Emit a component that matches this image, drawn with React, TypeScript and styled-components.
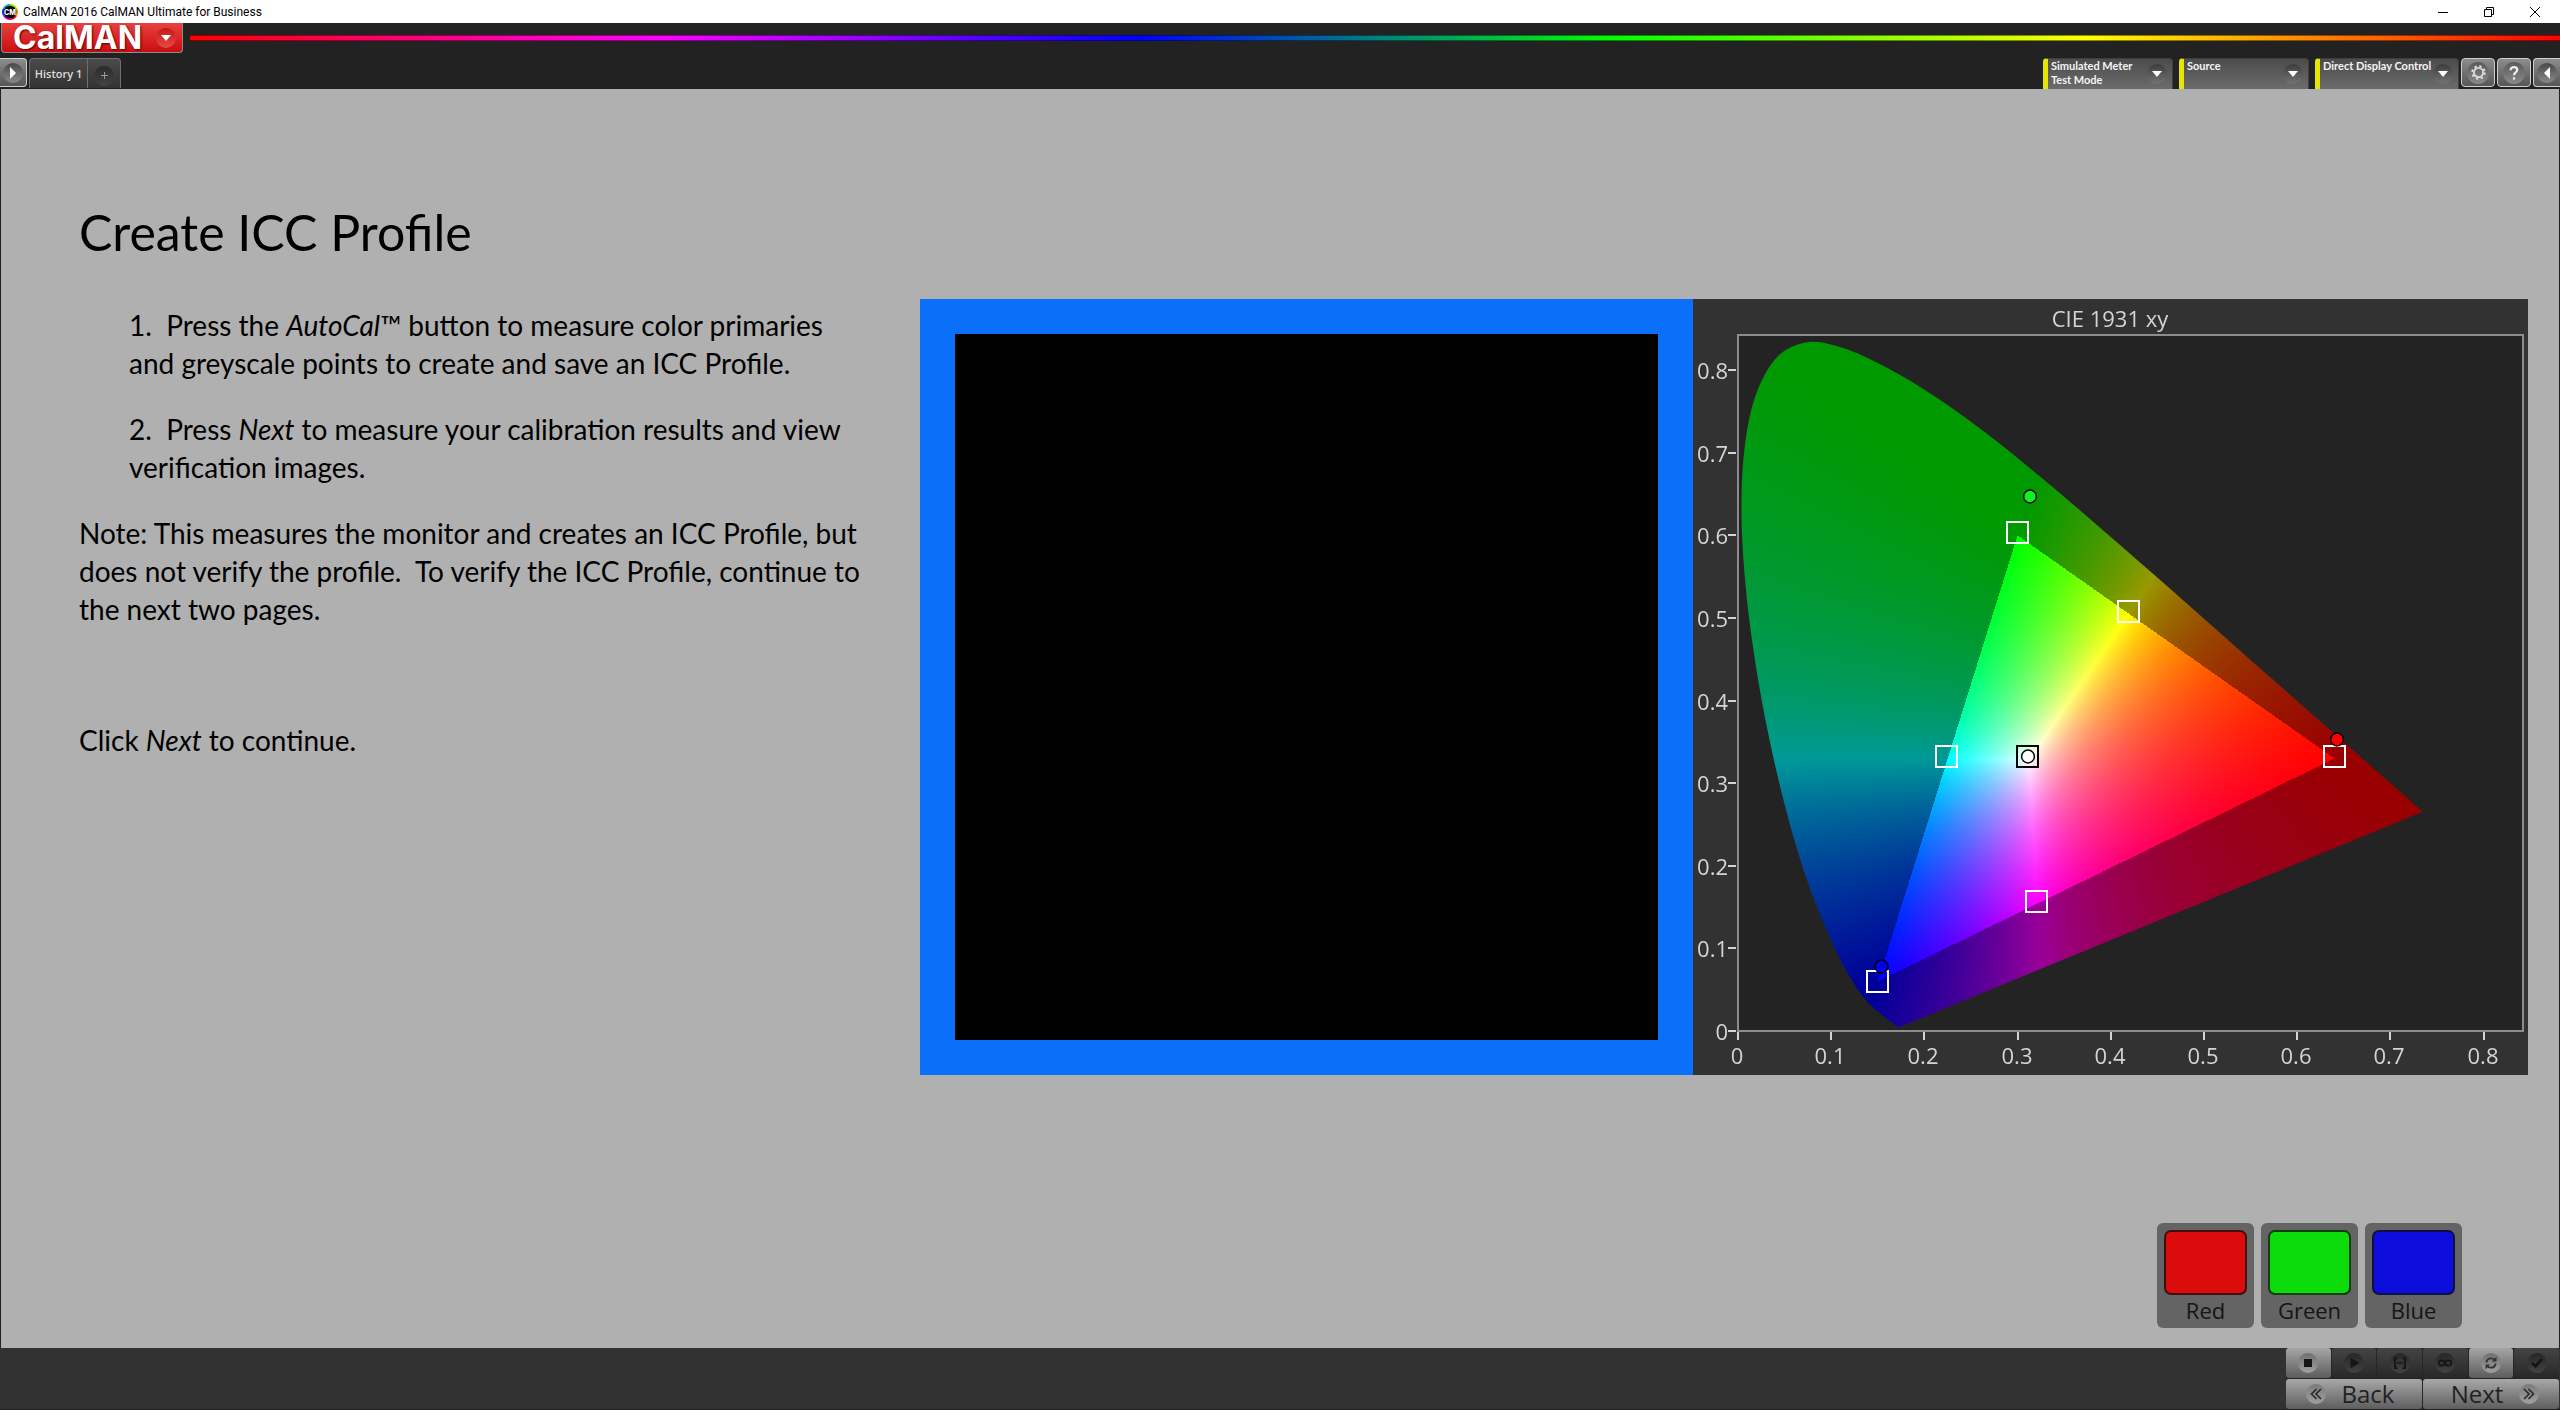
import React, { useEffect, useRef } from "react";
import styled, { createGlobalStyle } from "styled-components";

const UI = `"Open Sans", "Noto Sans", sans-serif`;
const BODY = `Lato, "Open Sans", sans-serif`;

const GlobalStyle = createGlobalStyle`
  * { box-sizing: border-box; }
  body { margin: 0; background: #222; font-family: ${UI}; }
  button { font: inherit; color: inherit; margin: 0; padding: 0; border: 0; background: none; cursor: pointer; }
  h1, h2, p { margin: 0; font-weight: 400; }
`;

const Shell = styled.div`
  min-height: 100vh;
  display: flex;
  flex-direction: column;
  background: #222;
`;

/* ---------- window title bar ---------- */
const TitleBar = styled.header`
  height: 23px;
  display: flex;
  align-items: center;
  gap: 5px;
  padding-left: 2px;
  background: #fff;
  color: #000;
  font: 400 12px/16px Roboto, ${UI};
`;
const TitleText = styled.span`
  flex: 1;
`;
const WindowButtons = styled.div`
  display: flex;
  padding-right: 2px;
`;
const WindowButton = styled.button`
  width: 46px;
  height: 21px;
  display: grid;
  place-items: center;
`;

/* ---------- header ---------- */
const Header = styled.div`
  display: flex;
  flex-direction: column;
  gap: 5px;
  background: #222;
`;
const BrandRow = styled.div`
  display: flex;
  align-items: flex-start;
  gap: 7px;
  padding-left: 1px;
`;
const BrandButton = styled.button`
  width: 182px;
  height: 30px;
  display: flex;
  align-items: center;
  justify-content: space-between;
  padding: 0 6px 0 11px;
  border: 1px solid #8d8d8d;
  border-top: 0;
  border-radius: 0 0 4px 4px;
  background: linear-gradient(#e8423e, #c90d10);
  color: #fff;
  font: 700 32px/28px Inter, sans-serif;
  text-shadow: 1px 1px 2px #5a0000;
`;
const Knob = styled.span<{ $size: number; $from: string; $to: string; $ink?: string }>`
  flex: none;
  width: ${(p) => p.$size}px;
  height: ${(p) => p.$size}px;
  display: grid;
  place-items: center;
  border-radius: 50%;
  background: linear-gradient(${(p) => p.$from}, ${(p) => p.$to});
  color: ${(p) => p.$ink ?? "#fff"};
`;
const Spectrum = styled.div`
  flex: 1;
  height: 6px;
  margin-top: 12px;
  border: solid rgba(0, 0, 0, 0.45);
  border-width: 1px 0;
  background: linear-gradient(90deg, #f00, #f0f 20%, #00f 40%, #0f0 60%, #ff0 80%, #f00);
`;
const TabRow = styled.div`
  height: 31px;
  display: flex;
  justify-content: space-between;
  align-items: flex-start;
`;
const TabGroup = styled.div<{ $gap: number }>`
  display: flex;
  gap: ${(p) => p.$gap}px;
`;
const SquareButton = styled.button<{ $open?: "left" | "right" }>`
  width: ${(p) => (p.$open ? 27 : 34)}px;
  height: 29px;
  display: grid;
  place-items: center;
  border: 1px solid #cfcfcf;
  border-radius: 4px;
  background: linear-gradient(#8c8c8c, #565656);
  ${(p) => p.$open === "left" && "border-left: 0; border-radius: 0 4px 4px 0;"}
  ${(p) => p.$open === "right" && "border-right: 0; border-radius: 4px 0 0 4px;"}
`;
const HistoryTabs = styled.div`
  height: 30px;
  display: flex;
  border: 1px solid #6f6f6f;
  border-bottom: 0;
  border-radius: 4px 4px 0 0;
  background: linear-gradient(#4a4a4a, #333);
  color: #ddd;
`;
const HistoryTab = styled.button`
  width: 58px;
  border-right: 1px solid #6f6f6f;
  font-size: 11px;
  font-weight: 600;
  line-height: 16px;
`;
const AddTab = styled.button`
  width: 32px;
  display: grid;
  place-items: center;
  padding-top: 4px;
`;
const DeviceButton = styled.button<{ $width: number }>`
  width: ${(p) => p.$width}px;
  height: 31px;
  display: flex;
  justify-content: space-between;
  padding: 0 5px 0 3px;
  border: 1px solid #3f3f3f;
  border-left: 5px solid #e6e600;
  border-bottom: 0;
  border-radius: 4px 4px 0 0;
  background: linear-gradient(#4c4c4c, #6c6c6c);
  color: #f4f4f4;
  font: 700 11px/14px ${BODY};
  text-align: left;
  white-space: nowrap;
`;
const DeviceKnob = styled.span`
  display: flex;
  align-items: center;
`;

/* ---------- workspace ---------- */
const Workspace = styled.main`
  flex: 1;
  display: flex;
  flex-direction: column;
  justify-content: space-between;
  margin: 0 1px;
  padding: 113px 31px 20px 78px;
  background: #b0b0b0;
  color: #000;
`;
const Content = styled.div`
  display: grid;
  grid-template-columns: minmax(0, 841fr) minmax(0, 773fr) minmax(0, 835fr);
  align-items: start;
`;
const Article = styled.article`
  font: 400 28px/38px ${BODY};
  padding-right: 50px;
`;
const Heading = styled.h1`
  font-size: 50px;
  line-height: 60px;
  margin-bottom: 44px;
`;
const Step = styled.p`
  padding-left: 50px;
  margin-bottom: 28px;
`;
const Note = styled.p`
  margin-bottom: 93px;
`;
const PatchFrame = styled.section`
  margin-top: 97px;
  aspect-ratio: 773 / 776;
  display: flex;
  padding: 35px;
  background: #0a70fa;
`;
const Patch = styled.div`
  flex: 1;
  background: #000;
`;
const ChartPanel = styled.section`
  margin-top: 97px;
  display: grid;
  aspect-ratio: 835 / 776;
  background: #323232;
`;
const ChartRaster = styled.canvas`
  grid-area: 1 / 1;
  width: 100%;
  height: 100%;
`;
const ChartOverlay = styled.svg`
  grid-area: 1 / 1;
  width: 100%;
  height: 100%;
  font: 400 22px ${UI};
`;
const Swatches = styled.div`
  display: flex;
  justify-content: flex-end;
  gap: 7px;
  padding-right: 66px;
`;
const SwatchButton = styled.button`
  width: 97px;
  height: 105px;
  display: flex;
  flex-direction: column;
  align-items: center;
  padding-top: 7px;
  border-radius: 6px;
  background: #646464;
  color: #151515;
  font-size: 22px;
  line-height: 31px;
`;
const SwatchColour = styled.span<{ $fill: string; $edge: string }>`
  width: 83px;
  height: 65px;
  border: 2px solid ${(p) => p.$edge};
  border-radius: 7px;
  background: ${(p) => p.$fill};
`;

/* ---------- footer ---------- */
const Footer = styled.footer`
  height: 62px;
  display: flex;
  justify-content: flex-end;
  padding-right: 1px;
  border-bottom: 1px solid #222;
  background: #323232;
`;
const Transport = styled.div`
  width: 273px;
  display: grid;
  grid-template-columns: repeat(6, 1fr);
  grid-template-rows: 30px 30px;
  gap: 1px;
  background: #262626;
`;
const TransportButton = styled.button<{ $lit?: boolean }>`
  display: grid;
  place-items: center;
  border-radius: 3px;
  background: ${(p) => (p.$lit ? "linear-gradient(#a6a6a6, #5c5c5c)" : "linear-gradient(#444, #282828)")};
`;
const PageButton = styled.button<{ $side: "left" | "right" }>`
  grid-column: span 3;
  display: flex;
  align-items: center;
  justify-content: center;
  gap: 16px;
  padding-${(p) => (p.$side === "left" ? "right" : "left")}: 8px;
  border-radius: 3px;
  background: linear-gradient(#a8a8a8, #5e5e5e);
  color: #222;
  font-size: 24px;
  line-height: 28px;
`;

/* ---------- CIE chart ---------- */
const CHART_W = 835;
const CHART_H = 776;
const px = (x: number) => 45 + x * 932;
const py = (y: number) => 732 - y * 826;

const LOCUS: [number, number][] = [
  [0.1741, 0.005], [0.1733, 0.0048], [0.1714, 0.0051], [0.1689, 0.0069], [0.1644, 0.0109],
  [0.1566, 0.0177], [0.144, 0.0297], [0.1355, 0.0399], [0.1241, 0.0578], [0.1096, 0.0868],
  [0.0913, 0.1327], [0.0687, 0.2007], [0.0454, 0.295], [0.0235, 0.4127], [0.0082, 0.5384],
  [0.0039, 0.6548], [0.0139, 0.7502], [0.0389, 0.812], [0.0743, 0.8338], [0.1142, 0.8262],
  [0.1547, 0.8059], [0.1929, 0.7816], [0.2296, 0.7543], [0.2658, 0.7243], [0.3016, 0.6923],
  [0.3373, 0.6589], [0.3731, 0.6245], [0.4087, 0.5896], [0.4441, 0.5547], [0.4788, 0.5202],
  [0.5125, 0.4866], [0.5448, 0.4544], [0.5752, 0.4242], [0.6029, 0.3965], [0.627, 0.3725],
  [0.6482, 0.3514], [0.6658, 0.334], [0.6915, 0.3083], [0.7347, 0.2653],
];

function traceLocus(ctx: CanvasRenderingContext2D) {
  const pts = LOCUS.map(([x, y]) => [px(x), py(y)]);
  ctx.beginPath();
  ctx.moveTo(pts[0][0], pts[0][1]);
  for (let i = 0; i < pts.length - 1; i++) {
    const a = pts[Math.max(0, i - 1)];
    const b = pts[i];
    const c = pts[i + 1];
    const d = pts[Math.min(pts.length - 1, i + 2)];
    ctx.bezierCurveTo(
      b[0] + (c[0] - a[0]) / 6, b[1] + (c[1] - a[1]) / 6,
      c[0] - (d[0] - b[0]) / 6, c[1] - (d[1] - b[1]) / 6,
      c[0], c[1],
    );
  }
  ctx.closePath();
}

/* Chromaticity to display colour: brightest channel at full scale, dimmed outside the Rec.709 gamut. */
function chromaticityColour(x: number, y: number): [number, number, number] {
  const X = x / y;
  const Z = (1 - x - y) / y;
  const rgb = [
    3.2406 * X - 1.5372 - 0.4986 * Z,
    -0.9689 * X + 1.8758 + 0.0415 * Z,
    0.0557 * X - 0.204 + 1.057 * Z,
  ];
  const peak = Math.max(...rgb);
  const level = Math.min(...rgb) < 0 ? 153 : 255;
  return rgb.map((c) => level * (Math.max(0, c) / peak)) as [number, number, number];
}

function drawGamut(canvas: HTMLCanvasElement) {
  const ctx = canvas.getContext("2d");
  if (!ctx) return;
  ctx.clearRect(0, 0, CHART_W, CHART_H);
  const image = ctx.createImageData(CHART_W, CHART_H);
  for (let j = 0; j < CHART_H; j++) {
    for (let i = 0; i < CHART_W; i++) {
      const x = (i + 0.5 - 45) / 932;
      const y = Math.max(0.001, (732 - j - 0.5) / 826);
      const [r, g, b] = chromaticityColour(x, y);
      image.data.set([r, g, b, 255], (j * CHART_W + i) * 4);
    }
  }
  ctx.putImageData(image, 0, 0);
  ctx.globalCompositeOperation = "destination-in";
  traceLocus(ctx);
  ctx.fill();
  ctx.globalCompositeOperation = "destination-over";
  ctx.fillStyle = "#232323";
  ctx.fillRect(44, 35, 787, 698);
  ctx.globalCompositeOperation = "source-over";
}

const TARGETS: { x: number; y: number; stroke: string }[] = [
  { x: 324.5, y: 233.5, stroke: "#fff" },
  { x: 435.5, y: 312.5, stroke: "#fff" },
  { x: 253.5, y: 457.5, stroke: "#fff" },
  { x: 343.5, y: 602.5, stroke: "#fff" },
  { x: 184.5, y: 682.5, stroke: "#fff" },
  { x: 641.5, y: 457.5, stroke: "#fff" },
  { x: 334.5, y: 457.5, stroke: "#000" },
];
const READINGS = [
  { x: 337, y: 197.5, fill: "#0cf520" },
  { x: 188.5, y: 667.5, fill: "#0000f5" },
  { x: 644, y: 440.5, fill: "#f00" },
  { x: 335, y: 457.5, fill: "#fff" },
];
const TICKS = [0, 1, 2, 3, 4, 5, 6, 7, 8];
const tickLabel = (n: number) => (n === 0 ? "0" : `0.${n}`);

function CieChart() {
  const ref = useRef<HTMLCanvasElement>(null);
  useEffect(() => {
    if (ref.current) drawGamut(ref.current);
  }, []);
  return (
    <ChartPanel aria-label="CIE 1931 xy">
      <ChartRaster ref={ref} width={CHART_W} height={CHART_H} />
      <ChartOverlay viewBox={`0 0 ${CHART_W} ${CHART_H}`}>
        <rect x="45" y="36" width="785" height="696" fill="none" stroke="#8c8c8c" strokeWidth="2" />
        <text x="417" y="28" textAnchor="middle" fill="#d4d4d4">CIE 1931 xy</text>
        {TICKS.map((n) => (
          <g key={n} fill="#d4d4d4">
            <rect x={Math.round(px(n / 10)) - 1} y="733" width="2" height="8" />
            <rect x="35" y={Math.round(py(n / 10)) - 1} width="8" height="2" />
            <text x={Math.round(px(n / 10)) - 1} y="765" textAnchor="middle">{tickLabel(n)}</text>
            <text x="35" y={Math.round(py(n / 10)) + 9} textAnchor="end">{tickLabel(n)}</text>
          </g>
        ))}
        {TARGETS.map((t) => (
          <rect key={`${t.x}-${t.y}`} x={t.x - 10.5} y={t.y - 10.5} width="21" height="21" fill="none" stroke={t.stroke} strokeWidth="2" />
        ))}
        {READINGS.map((r) => (
          <circle key={r.fill} cx={r.x} cy={r.y} r="6.4" fill={r.fill} stroke="#000" strokeWidth="1.5" />
        ))}
      </ChartOverlay>
    </ChartPanel>
  );
}

/* ---------- glyphs ---------- */
const DownArrow = () => (
  <svg width="10" height="6" viewBox="0 0 10 6"><path d="M0 0h10L5 6z" fill="#fff" /></svg>
);
const SideArrow = ({ flip }: { flip?: boolean }) => (
  <svg width="6" height="12" viewBox="0 0 6 12"><path d={flip ? "M6 0v12L0 6z" : "M0 0v12l6-6z"} fill="#fff" /></svg>
);
const Gear = () => (
  <svg width="15" height="15" viewBox="0 0 15 15" fill="none" stroke="#ddd">
    <circle cx="7.5" cy="7.5" r="4.6" strokeWidth="1.8" />
    <circle cx="7.5" cy="7.5" r="6.3" strokeWidth="1.8" strokeDasharray="2.4 2.55" />
  </svg>
);
const Question = () => (
  <svg width="10" height="14" viewBox="0 0 10 14" fill="none" stroke="#eee" strokeWidth="2.2">
    <path d="M1.6 4.2C1.6 2.2 3 1.2 5 1.2s3.3 1 3.3 2.8C8.3 6.2 5 6.2 5 9.3" />
    <path d="M5 11.300v2.300" />
  </svg>
);
const AppLogo = () => (
  <svg width="16" height="16" viewBox="0 0 16 16">
    <path d="M8 8V0a8 8 0 0 1 6.900 4z" fill="#9be000" />
    <path d="M8 8l6.900-4a8 8 0 0 1 0 8z" fill="#f09000" />
    <path d="M8 8l6.900 4A8 8 0 0 1 8 16z" fill="#e8102a" />
    <path d="M8 8v8a8 8 0 0 1-6.900-4z" fill="#c000e0" />
    <path d="M8 8l-6.900 4a8 8 0 0 1 0-8z" fill="#2030f0" />
    <path d="M8 8L1.100 4A8 8 0 0 1 8 0z" fill="#00b0c0" />
    <circle cx="8" cy="8" r="6.300" fill="#000" />
    <text x="8" y="10.500" textAnchor="middle" fill="#fff" fontFamily="Inter, sans-serif" fontWeight="800" fontSize="7">CM</text>
  </svg>
);

const INK = "#151515";
const Icon = ({ name }: { name: string }) => (
  <svg width="16" height="14" viewBox="0 0 16 14" fill="none" stroke={INK} strokeWidth="1.8">
    {name === "Stop" && <rect x="4" y="3" width="8" height="8" fill={INK} stroke="none" />}
    {name === "Play" && <path d="M4.500 2v10l9-5z" fill={INK} stroke="none" />}
    {name === "Range" && <><path d="M5 2H3v10h2M11 2h2v10h-2" /><path d="M5 7h6" strokeDasharray="1.5 1" /></>}
    {name === "Loop" && (
      <g strokeWidth="1.6">
        <ellipse cx="4.700" cy="7" rx="3" ry="2.600" />
        <ellipse cx="11.300" cy="7" rx="3" ry="2.600" />
      </g>
    )}
    {name === "Refresh" && <g stroke="#333"><path d="M3.300 6.500C3.800 3.700 6 2.300 8.200 2.300c1.600 0 2.800.6 3.700 1.700M12.700 7.500c-.5 2.800-2.700 4.200-4.900 4.200-1.600 0-2.800-.6-3.700-1.700" /><path d="M13.500.8v4.700H8.800zM2.500 13.200V8.500h4.700z" fill="#333" stroke="none" /></g>}
    {name === "Accept" && <path d="M3 7l3.500 3.300L13 3" strokeWidth="2.8" />}
  </svg>
);
const Chevrons = ({ flip }: { flip?: boolean }) => (
  <svg width="12" height="12" viewBox="0 0 12 12" fill="none" stroke="#2b2b2b" strokeWidth="1.7">
    <path d={flip ? "M1 1l5 5-5 5M5.500 1l5 5-5 5" : "M6.500 1l-5 5 5 5M11 1L6 6l5 5"} />
  </svg>
);

const DEVICES = [
  { label: ["Simulated Meter", "Test Mode"], width: 130 },
  { label: ["Source"], width: 130 },
  { label: ["Direct Display Control"], width: 144 },
];
const SWATCHES = [
  { name: "Red", fill: "#dc0c0c", edge: "#401010" },
  { name: "Green", fill: "#0cdc0c", edge: "#103c10" },
  { name: "Blue", fill: "#0c0cdc", edge: "#101040" },
];
const TRANSPORT = [
  { name: "Stop", lit: true },
  { name: "Play" },
  { name: "Range" },
  { name: "Loop" },
  { name: "Refresh", lit: true },
  { name: "Accept" },
];

export default function App() {
  return (
    <Shell>
      <GlobalStyle />
      <TitleBar>
        <AppLogo />
        <TitleText>CalMAN 2016 CalMAN Ultimate for Business</TitleText>
        <WindowButtons>
          <WindowButton aria-label="Minimize">
            <svg width="10" height="10"><path d="M0 5.500h10" stroke="#000" /></svg>
          </WindowButton>
          <WindowButton aria-label="Restore">
            <svg width="10" height="10" fill="none" stroke="#000"><path d="M.5 2.500h7v7h-7zM2.500 2.500v-2h7v7h-2" /></svg>
          </WindowButton>
          <WindowButton aria-label="Close">
            <svg width="10" height="10" stroke="#000"><path d="M0 0l10 10M10 0L0 10" /></svg>
          </WindowButton>
        </WindowButtons>
      </TitleBar>

      <Header>
        <BrandRow>
          <BrandButton>
            CalMAN
            <Knob $size={20} $from="#c01818" $to="#e84a46"><DownArrow /></Knob>
          </BrandButton>
          <Spectrum />
        </BrandRow>
        <TabRow>
          <TabGroup $gap={2}>
            <SquareButton $open="left" aria-label="Expand workflow">
              <Knob $size={20} $from="#4a4a4a" $to="#8a8a8a"><SideArrow /></Knob>
            </SquareButton>
            <HistoryTabs>
              <HistoryTab>History 1</HistoryTab>
              <AddTab aria-label="Add history">
                <Knob $size={20} $from="#2a2a2a" $to="#444">
                  <svg width="7" height="7"><path d="M3.500 0v7M0 3.500h7" stroke="#999" /></svg>
                </Knob>
              </AddTab>
            </HistoryTabs>
          </TabGroup>
          <TabGroup $gap={2}>
            <TabGroup $gap={6}>
              {DEVICES.map((d) => (
                <DeviceButton key={d.label[0]} $width={d.width}>
                  <span>{d.label.map((l) => <div key={l}>{l}</div>)}</span>
                  <DeviceKnob>
                    <Knob $size={20} $from="#3c3c3c" $to="#747474"><DownArrow /></Knob>
                  </DeviceKnob>
                </DeviceButton>
              ))}
            </TabGroup>
            <SquareButton aria-label="Settings"><Knob $size={22} $from="#5a5a5a" $to="#8a8a8a"><Gear /></Knob></SquareButton>
            <SquareButton aria-label="Help"><Knob $size={22} $from="#5a5a5a" $to="#8a8a8a"><Question /></Knob></SquareButton>
            <SquareButton $open="right" aria-label="Collapse panel">
              <Knob $size={20} $from="#4a4a4a" $to="#8a8a8a"><SideArrow flip /></Knob>
            </SquareButton>
          </TabGroup>
        </TabRow>
      </Header>

      <Workspace>
        <Content>
          <Article>
            <Heading>Create ICC Profile</Heading>
            <Step>
              {"1.\u00a0 Press the "}<em>AutoCal</em>{"™ button to measure color primaries and greyscale points to create and save an ICC Profile."}
            </Step>
            <Step>
              {"2.\u00a0 Press "}<em>Next</em>{" to measure your calibration results and view verification images."}
            </Step>
            <Note>
              {"Note: This measures the monitor and creates an ICC Profile, but does not verify the profile.\u00a0 To verify the ICC Profile, continue to the next two pages."}
            </Note>
            <p>Click <em>Next</em> to continue.</p>
          </Article>
          <PatchFrame aria-label="Test pattern"><Patch /></PatchFrame>
          <CieChart />
        </Content>
        <Swatches>
          {SWATCHES.map((s) => (
            <SwatchButton key={s.name}>
              <SwatchColour $fill={s.fill} $edge={s.edge} />
              {s.name}
            </SwatchButton>
          ))}
        </Swatches>
      </Workspace>

      <Footer>
        <Transport>
          {TRANSPORT.map((t) => (
            <TransportButton key={t.name} $lit={t.lit} aria-label={t.name}>
              <Knob $size={20} $from={t.lit ? "#707070" : "#262626"} $to={t.lit ? "#a0a0a0" : "#424242"}>
                <Icon name={t.name} />
              </Knob>
            </TransportButton>
          ))}
          <PageButton $side="left">
            <Knob $size={20} $from="#7a7a7a" $to="#a0a0a0"><Chevrons /></Knob>
            Back
          </PageButton>
          <PageButton $side="right">
            Next
            <Knob $size={20} $from="#7a7a7a" $to="#a0a0a0"><Chevrons flip /></Knob>
          </PageButton>
        </Transport>
      </Footer>
    </Shell>
  );
}
